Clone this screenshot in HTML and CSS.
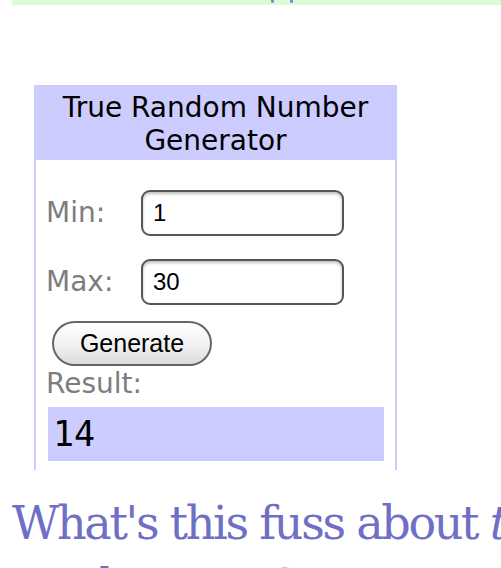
FILE: index.html
```html
<!DOCTYPE html>
<html>
<head>
<meta charset="utf-8">
<link rel="stylesheet" href="styles.css">
</head>
<body>
<div class="topbar"><span class="tick t1"></span><span class="tick t2"></span></div>
<div class="widget">
  <div class="head">True Random Number<br>Generator</div>
  <div class="body">
    <div class="row"><span class="lbl">Min:</span><div class="field">1</div></div>
    <div class="row"><span class="lbl">Max:</span><div class="field">30</div></div>
    <div class="gen">Generate</div>
    <div class="lbl res-lbl">Result:</div>
    <div class="result">14</div>
  </div>
</div>
<h1 class="title"><span class="l1">What's this fuss about <em>true</em></span><span class="l2">randomness?</span></h1>
</body>
</html>
```
FILE: styles.css
```css
html, body {
  margin: 0;
  padding: 0;
  overflow: hidden;
  background: #fff;
}
.topbar {
  position: relative;
  margin-left: 12px;
  height: 5px;
  background: #dcfcd8;
}
.tick {
  position: absolute;
  top: 0;
  width: 3px;
  height: 3px;
  border-radius: 0 0 2px 2px;
  background: #8585cc;
}
.t1 { left: 259px; }
.t2 { left: 278px; }
.widget {
  margin: 80px 0 0 34px;
  width: 359px;
  border-left: 2px solid #ccccff;
  border-right: 2px solid #ccccff;
  font-family: "DejaVu Sans", Verdana, sans-serif;
}
.head {
  background: #ccccff;
  margin: 0 -2px;
  padding: 6px 0 3px;
  text-align: center;
  font-size: 28px;
  line-height: 33px;
  color: #000;
}
.body {
  padding: 30px 11px 9px 12px;
  display: flex;
  flex-direction: column;
}
.row {
  display: flex;
  align-items: center;
  margin-bottom: 23px;
}
.row + .row { margin-bottom: 16px; }
.lbl {
  font-size: 28px;
  line-height: 32px;
  color: #7d7d7d;
  margin-left: -2px;
}
.row .lbl { width: 95px; }
.field {
  box-sizing: border-box;
  width: 203px;
  height: 46px;
  border: 2px solid #555;
  border-radius: 9px;
  box-shadow: inset 0 2px 3px rgba(0,0,0,0.25);
  padding-left: 10px;
  display: flex;
  align-items: center;
  font-family: "Liberation Sans", Arial, sans-serif;
  font-size: 24px;
  color: #000;
}
.gen {
  box-sizing: border-box;
  margin-left: 4px;
  width: 160px;
  height: 45px;
  border: 2px solid #666;
  border-radius: 23px;
  background: linear-gradient(#ffffff, #f4f4f4 45%, #dcdcdc);
  display: flex;
  align-items: center;
  justify-content: center;
  font-family: "Liberation Sans", Arial, sans-serif;
  font-size: 25px;
  color: #000;
}
.res-lbl {
  margin-top: 2px;
  margin-bottom: 7px;
}
.result {
  height: 54px;
  background: #ccccff;
  padding-left: 5px;
  display: flex;
  align-items: center;
  font-family: "DejaVu Sans Mono", monospace;
  font-size: 35px;
  color: #000;
}
.title {
  margin: 27px 0 0 12px;
  white-space: nowrap;
  font-family: "DejaVu Serif", Georgia, serif;
  font-weight: normal;
  font-size: 46px;
  letter-spacing: -2.3px;
  line-height: 53px;
  color: #6f6fc6;
}
.title em { font-style: italic; }
.l1, .l2 { display: block; }
.l2 { margin-top: 10px; }
```
